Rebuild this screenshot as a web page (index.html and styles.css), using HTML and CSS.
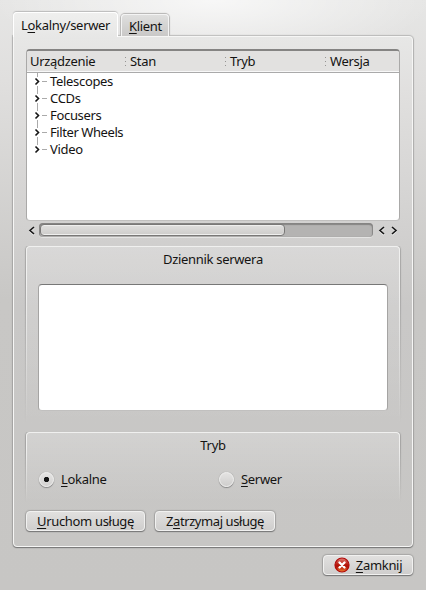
FILE: index.html
```
<!DOCTYPE html>
<html lang="pl">
<head>
<meta charset="utf-8">
<title>INDI</title>
<link rel="stylesheet" href="styles.css">
</head>
<body>
<main class="dialog">
  <nav class="tabs">
    <div class="tab active"><span>L<u>o</u>kalny/serwer</span></div>
    <div class="tab"><span><u>K</u>lient</span></div>
  </nav>
  <section class="panel">
    <div class="tree">
      <div class="head"><span>Urządzenie</span><span>Stan</span><span>Tryb</span><span>Wersja</span></div>
      <ul class="rows">
        <li><svg class="branch" viewBox="0 0 14 17"><path class="line" d="M4.5 0V4M4.5 13V17M9 8.5H14"/><path class="arrow" d="M2.500 5.500L5.500 8.500L2.500 11.500"/></svg><span>Telescopes</span></li>
        <li><svg class="branch" viewBox="0 0 14 17"><path class="line" d="M4.5 0V4M4.5 13V17M9 8.5H14"/><path class="arrow" d="M2.500 5.500L5.500 8.500L2.500 11.500"/></svg><span>CCDs</span></li>
        <li><svg class="branch" viewBox="0 0 14 17"><path class="line" d="M4.5 0V4M4.5 13V17M9 8.5H14"/><path class="arrow" d="M2.500 5.500L5.500 8.500L2.500 11.500"/></svg><span>Focusers</span></li>
        <li><svg class="branch" viewBox="0 0 14 17"><path class="line" d="M4.5 0V4M4.5 13V17M9 8.5H14"/><path class="arrow" d="M2.500 5.500L5.500 8.500L2.500 11.500"/></svg><span class="tight">Filter Wheels</span></li>
        <li><svg class="branch" viewBox="0 0 14 17"><path class="line" d="M4.5 0V4M9 8.5H14"/><path class="arrow" d="M2.500 5.500L5.500 8.500L2.500 11.500"/></svg><span>Video</span></li>
      </ul>
    </div>
    <div class="scroll">
      <svg class="step" viewBox="0 0 13 15"><path class="halo" d="M8 5L4 8.500L8 12"/><path class="arrow" d="M8 4L4 7.500L8 11"/></svg>
      <div class="groove"><div class="thumb"></div></div>
      <svg class="steps" viewBox="0 0 27 15"><path class="halo" d="M11 5L7 8.500L11 12M19 5L23 8.500L19 12"/><path class="arrow" d="M11 4L7 7.500L11 11M19 4L23 7.500L19 11"/></svg>
    </div>
    <section class="group log">
      <h2>Dziennik serwera</h2>
      <div class="textbox"></div>
    </section>
    <section class="group mode">
      <h2>Tryb</h2>
      <div class="radios">
        <label><i class="radio on"></i><span><u>L</u>okalne</span></label>
        <label><i class="radio"></i><span><u>S</u>erwer</span></label>
      </div>
    </section>
    <div class="actions">
      <button class="start"><span><u>U</u>ruchom usługę</span></button>
      <button class="stop"><span class="tight">Z<u>a</u>trzymaj usługę</span></button>
    </div>
  </section>
  <footer>
    <button class="close">
      <svg viewBox="0 0 16 16"><defs><linearGradient id="red" x1="0" y1="0" x2="0" y2="1"><stop offset="0" stop-color="#e08078"/><stop offset=".45" stop-color="#b81c10"/><stop offset=".6" stop-color="#b01005"/><stop offset="1" stop-color="#f08030"/></linearGradient></defs><circle cx="8" cy="8" r="7" fill="url(#red)" stroke="#b00808" stroke-width="1.200"/><path d="M5.500 5.500L10.500 10.500M10.500 5.500L5.500 10.500" stroke="#fff" stroke-width="2.400" stroke-linecap="round"/></svg>
      <span><u>Z</u>amknij</span>
    </button>
  </footer>
</main>
</body>
</html>
```
FILE: styles.css
```
* { box-sizing: border-box; }
body { margin: 0; font: 13px/17px "Noto Sans", "Open Sans", sans-serif; letter-spacing: -.32px; color: #141312; }
u { text-decoration-thickness: 1px; text-underline-offset: 2px; text-decoration-skip-ink: none; }
.tight { letter-spacing: -.42px; }
.dialog {
  width: 426px; height: 590px; padding: 12px 13px 0 13px;
  background:
    radial-gradient(ellipse 220px 64px at 213px 0, rgba(255,255,255,.7), rgba(255,255,255,0)),
    linear-gradient(#e6e6e5 0, #e0dfde 80px, #c8c7c5 300px, #c7c6c4 100%);
}
.tabs { display: flex; align-items: flex-end; gap: 4px; height: 24px; }
.tab {
  height: 22px; width: 48px; padding: 3px 0 0 7px; border-radius: 4px 4px 0 0;
  border: 1px solid #f4f4f4; border-bottom: 0; white-space: nowrap;
  background: linear-gradient(#dfdfde, #c9c8c7); box-shadow: 0 0 1px 1px #b5b4b3;
}
.tab.active {
  width: 105px; height: 25px; margin-bottom: -1px; position: relative; z-index: 1; padding: 4px 0 0 7px;
  border-color: #fff; background: linear-gradient(#efefee, #e7e7e6); box-shadow: 0 -1px 1px #bbb;
}
.tab:not(.active) { margin-left: -1px; clip-path: inset(-2px -2px 0 -2px); }
.panel {
  width: 400px; height: 511px; padding: 12px 12px 0 12px; border: 1px solid #f6f6f5;
  border-radius: 0 4px 4px 4px; box-shadow: 0 1px 1px #777, 0 0 1px 1px rgba(120,120,120,.4);
  background: linear-gradient(#e7e7e6, #e0dfde 60px, #c9c8c7 270px, #c7c6c4);
}
.tree {
  width: 374px; height: 172px; border: 1px solid #aaa9a8; border-top: 2px solid #858483;
  border-bottom-color: #c1c0bf; border-radius: 4px; background: #fff; overflow: hidden;
}
.head {
  display: grid; grid-template-columns: 100px 100px 100px 1fr; height: 22px; padding: 2px 0 0 3px;
  background: #e2e1e0; border-bottom: 1px solid #aaa; box-shadow: inset 0 -1px #f8f8f8;
}
.head span + span::before {
  content: ""; display: inline-block; width: 1px; height: 9px; margin: 0 4px 0 -5px;
  background: repeating-linear-gradient(#969594 0 1px, transparent 1px 4px);
}
.rows { list-style: none; margin: 0; padding: 0 0 0 6px; }
.rows li { display: flex; height: 17px; gap: 3px; }
.branch { width: 14px; height: 17px; }
.line { stroke: #aaa; fill: none; }
.arrow { stroke: #151515; stroke-width: 1.6; fill: none; }
.halo { stroke: #eee; stroke-width: 1.6; fill: none; }
.scroll { display: flex; height: 15px; margin-top: 2px; width: 374px; }
.step { width: 13px; height: 15px; flex: none; }
.groove {
  width: 334px; height: 14px; padding: 1px; border-radius: 4px; background: #b4b3b2;
  box-shadow: inset 0 1px 1px 1px #858483, 0 1px #e4e4e3;
}
.thumb {
  width: 245px; height: 12px; border: 1px solid #797877; border-radius: 4px;
  background: linear-gradient(#e0dfde, #cdccca); box-shadow: inset 0 1px #efefee, inset 0 -1px #efefee;
}
.steps { width: 27px; height: 15px; flex: none; }
.group {
  position: relative; width: 374px; border-radius: 4px;
  background: linear-gradient(rgba(255,255,255,.2), rgba(255,255,255,0));
}
.group::before {
  content: ""; position: absolute; inset: 0; border: 1px solid #f0f0ef; border-bottom: 0;
  border-radius: 4px 4px 0 0; box-shadow: 0 0 1px 1px rgba(120,120,120,.45); pointer-events: none;
  mask: linear-gradient(#000 20%, transparent); mask-clip: no-clip;
  clip-path: inset(-2px -2px 0 -2px);
}
.group h2 { margin: 0; padding-top: 5px; font: inherit; text-align: center; }
.log { height: 178px; margin-top: 8px; }
.textbox {
  width: 350px; height: 127px; margin: 16px 0 0 12px; border: 1px solid #a5a4a3;
  border-top-color: #777; border-bottom-color: #c1c0bf; border-radius: 4px; background: #fff;
}
.mode { height: 70px; margin-top: 8px; }
.radios { display: grid; grid-template-columns: 180px 1fr; padding: 17px 0 0 13px; }
.radios label { display: flex; gap: 7px; align-items: center; height: 17px; }
.radio {
  width: 15px; height: 15px; border: 1px solid #f1f1f0; border-radius: 50%;
  background: linear-gradient(#e4e3e2, #cfcecd); box-shadow: 0 1px 1px #888, 0 0 1px rgba(120,120,120,.7);
}
.radio.on { background: radial-gradient(circle, #151515 2.3px, transparent 3px), linear-gradient(#e4e3e2, #d3d2d1); }
.actions { display: flex; gap: 10px; margin-top: 9px; }
button {
  display: flex; align-items: center; justify-content: center; height: 20px; padding: 0;
  border: 1px solid #f1f1f0; border-radius: 4px; font: inherit; letter-spacing: inherit; color: inherit; white-space: nowrap;
  background: linear-gradient(#e1e0df, #cfcecd); box-shadow: 0 1px 1px #777, 0 0 1px 1px rgba(120,120,120,.4);
}
.start { width: 119px; }
.stop { width: 120px; }
footer { display: flex; justify-content: flex-end; margin-top: 8px; }
.close { width: 90px; gap: 6px; }
.close svg { width: 16px; height: 16px; }
```
